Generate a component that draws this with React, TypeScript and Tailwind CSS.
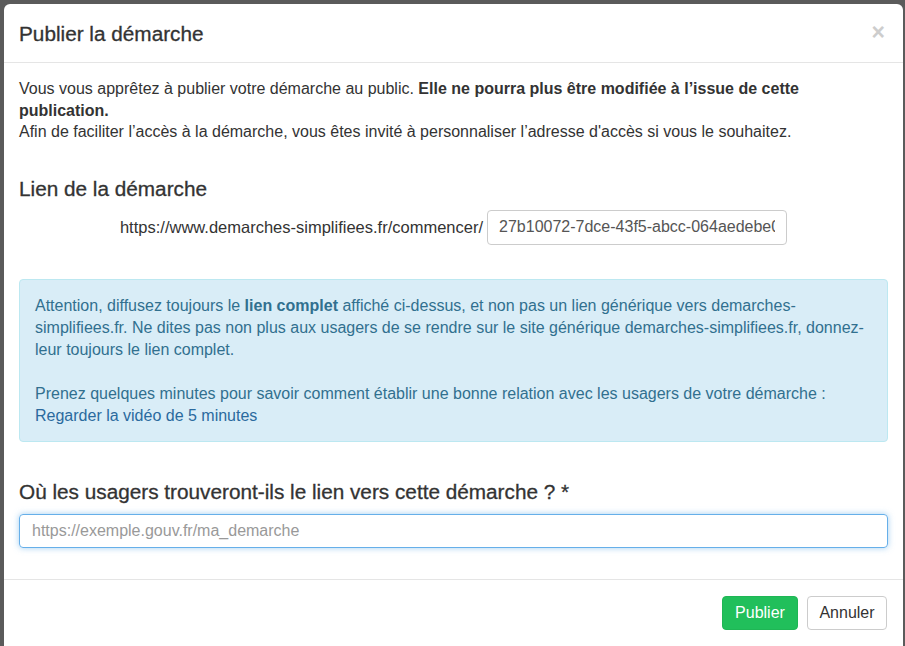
import React from 'react';

const font = { fontFamily: '"Liberation Sans", Arial, Helvetica, sans-serif' };

export default function App() {
  return (
    <div className="h-[646px] w-[905px] overflow-hidden bg-[#5b5b5b] pt-1 pl-1" style={font}>
      <div className="w-[899px] h-[700px] rounded-t-[6px] bg-white text-[#333]">
        {/* header */}
        <div className="flex items-center justify-between h-[59px] px-[15px] border-b border-[#e5e5e5]">
          <h4 className="text-[20.75px] leading-[26px] mt-[2px] [-webkit-text-stroke:0.3px_#333]">Publier la démarche</h4>
          <button className="text-[#cdcdcd] text-[23px] font-bold leading-none mr-[3px] mt-[-2px]">×</button>
        </div>

        {/* body */}
        <div className="px-[15px] pt-[15px] text-[16px]">
          <p className="leading-[21.5px]">
            Vous vous apprêtez à publier votre démarche au public.{' '}
            <b>Elle ne pourra plus être modifiée à l’issue de cette publication.</b>
            <br />
            Afin de faciliter l’accès à la démarche, vous êtes invité à personnaliser l’adresse d'accès si vous le souhaitez.
          </p>

          <h3 className="text-[20.75px] leading-[26px] mt-[33px] [-webkit-text-stroke:0.3px_#333]">Lien de la démarche</h3>
          <div className="flex items-center justify-center gap-[4px] mt-[8px]">
            <span className="text-[16.5px]">https://www.demarches-simplifiees.fr/commencer/</span>
            <input
              readOnly
              value="27b10072-7dce-43f5-abcc-064aedebe0b1"
              className="w-[300px] h-[35px] border border-[#ccc] rounded-[4px] px-[11px] text-[16px] text-[#555] outline-none"
              style={font}
            />
          </div>

          <div className="mt-[34px] border border-[#bce8f1] bg-[#d9edf7] rounded-[4px] px-[15px] pt-[15px] pb-[14px] text-[#31708f] leading-[22px]">
            <p>
              Attention, diffusez toujours le <b>lien complet</b> affiché ci-dessus, et non pas un lien générique vers demarches-simplifiees.fr. Ne dites pas non plus aux usagers de se rendre sur le site générique demarches-simplifiees.fr, donnez-leur toujours le lien complet.
            </p>
            <p className="mt-[22px]">
              Prenez quelques minutes pour savoir comment établir une bonne relation avec les usagers de votre démarche :
              <br />
              <a className="text-[#2a6a9e]">Regarder la vidéo de 5 minutes</a>
            </p>
          </div>

          <h3 className="text-[20.75px] leading-[26px] mt-[37px] [-webkit-text-stroke:0.3px_#333]">Où les usagers trouveront-ils le lien vers cette démarche ? *</h3>
          <input
            placeholder="https://exemple.gouv.fr/ma_demarche"
            className="mt-[9px] w-full h-[34px] border border-[#66afe9] rounded-[4px] px-[12px] text-[16px] outline-none shadow-[0_0_6px_rgba(102,175,233,0.6)] placeholder:text-[#999]"
            style={font}
          />
        </div>

        {/* footer */}
        <div className="mt-[31px] border-t border-[#e5e5e5] flex justify-end gap-[9px] pr-[16px] pt-[16px]">
          <button className="w-[76px] h-[34px] rounded-[4px] bg-[#21bf5b] border border-[#1fb655] text-white text-[16px]">Publier</button>
          <button className="w-[80px] h-[34px] rounded-[4px] bg-white border border-[#ccc] text-[#333] text-[16px]">Annuler</button>
        </div>
      </div>
    </div>
  );
}
